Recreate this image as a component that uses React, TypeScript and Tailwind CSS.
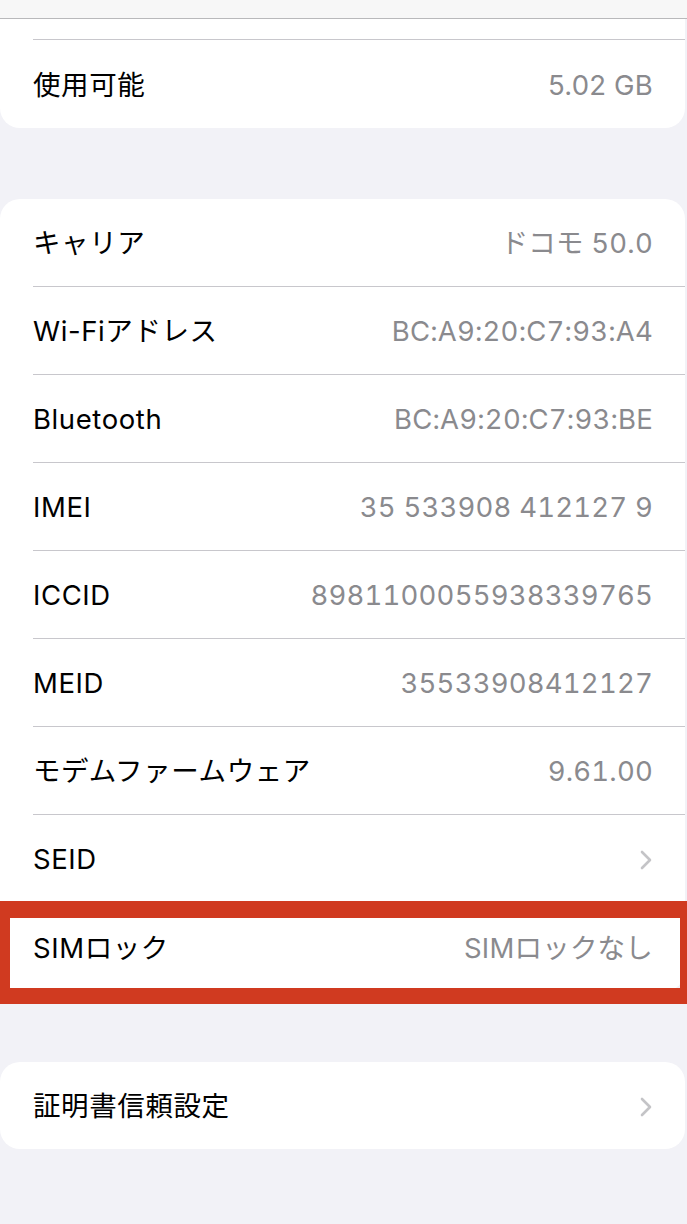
const rows = [
  { label: 'キャリア', value: 'ドコモ 50.0' },
  { label: 'Wi-Fiアドレス', value: 'BC:A9:20:C7:93:A4' },
  { label: 'Bluetooth', value: 'BC:A9:20:C7:93:BE' },
  { label: 'IMEI', value: '35 533908 412127 9' },
  { label: 'ICCID', value: '8981100055938339765' },
  { label: 'MEID', value: '35533908412127' },
  { label: 'モデムファームウェア', value: '9.61.00' },
  { label: 'SEID', chevron: true },
  { label: 'SIMロック', value: 'SIMロックなし', last: true },
];

function Chevron() {
  return (
    <svg width="14" height="22" viewBox="0 0 14 22" fill="none" className="shrink-0">
      <path d="M3 3l8 8-8 8" stroke="#c4c4c7" strokeWidth="2.6" strokeLinecap="round" strokeLinejoin="round" />
    </svg>
  );
}

function Row({ label, value, chevron, last }: { label: string; value?: string; chevron?: boolean; last?: boolean }) {
  return (
    <div className="pl-[33px]">
      <div className={`h-[88px] pt-[3px] flex items-center justify-between pr-[32px] ${last ? '' : 'border-b border-[#c8c7cc]'}`}>
        <span className="text-black">{label}</span>
        {value && <span className="text-[#8a8a8e] tracking-[0.2px] tabular-nums">{value}</span>}
        {chevron && <Chevron />}
      </div>
    </div>
  );
}

export default function App() {
  return (
    <div
      className="relative w-[687px] h-[1224px] bg-[#f2f2f7] overflow-hidden text-[27.5px] tracking-[0.6px]"
      style={{ fontFamily: 'Inter, "Noto Sans CJK JP", sans-serif' }}
    >
      <div className="h-[19px] bg-[#f7f7f7] border-b border-[#b9b9bb]" />

      {/* storage card, top cut off */}
      <div className="mr-[2px] bg-white rounded-b-[20px]">
        <div className="pl-[33px]">
          <div className="h-[21px] border-b border-[#c8c7cc]" />
        </div>
        <div className="pl-[33px] pr-[32px] pt-[4px] h-[88px] flex items-center justify-between">
          <span className="text-black">使用可能</span>
          <span className="text-[#8a8a8e] tracking-[0.2px]">5.02 GB</span>
        </div>
      </div>

      <div className="h-[71px]" />

      <div className="mr-[2px] bg-white rounded-[20px]">
        {rows.map(r => (
          <Row key={r.label} {...r} />
        ))}
      </div>

      <div className="h-[71px]" />

      <div className="mr-[2px] bg-white rounded-[20px]">
        <div className="pl-[33px] pr-[32px] pt-[3px] h-[87px] flex items-center justify-between">
          <span className="text-black">証明書信頼設定</span>
          <Chevron />
        </div>
      </div>

      {/* highlight box */}
      <div className="absolute left-0 top-[901px] w-[687px] h-[103px] border-t-[17px] border-b-[16px] border-l-[10px] border-r-[7px] border-[#d03a20]" />
    </div>
  );
}
